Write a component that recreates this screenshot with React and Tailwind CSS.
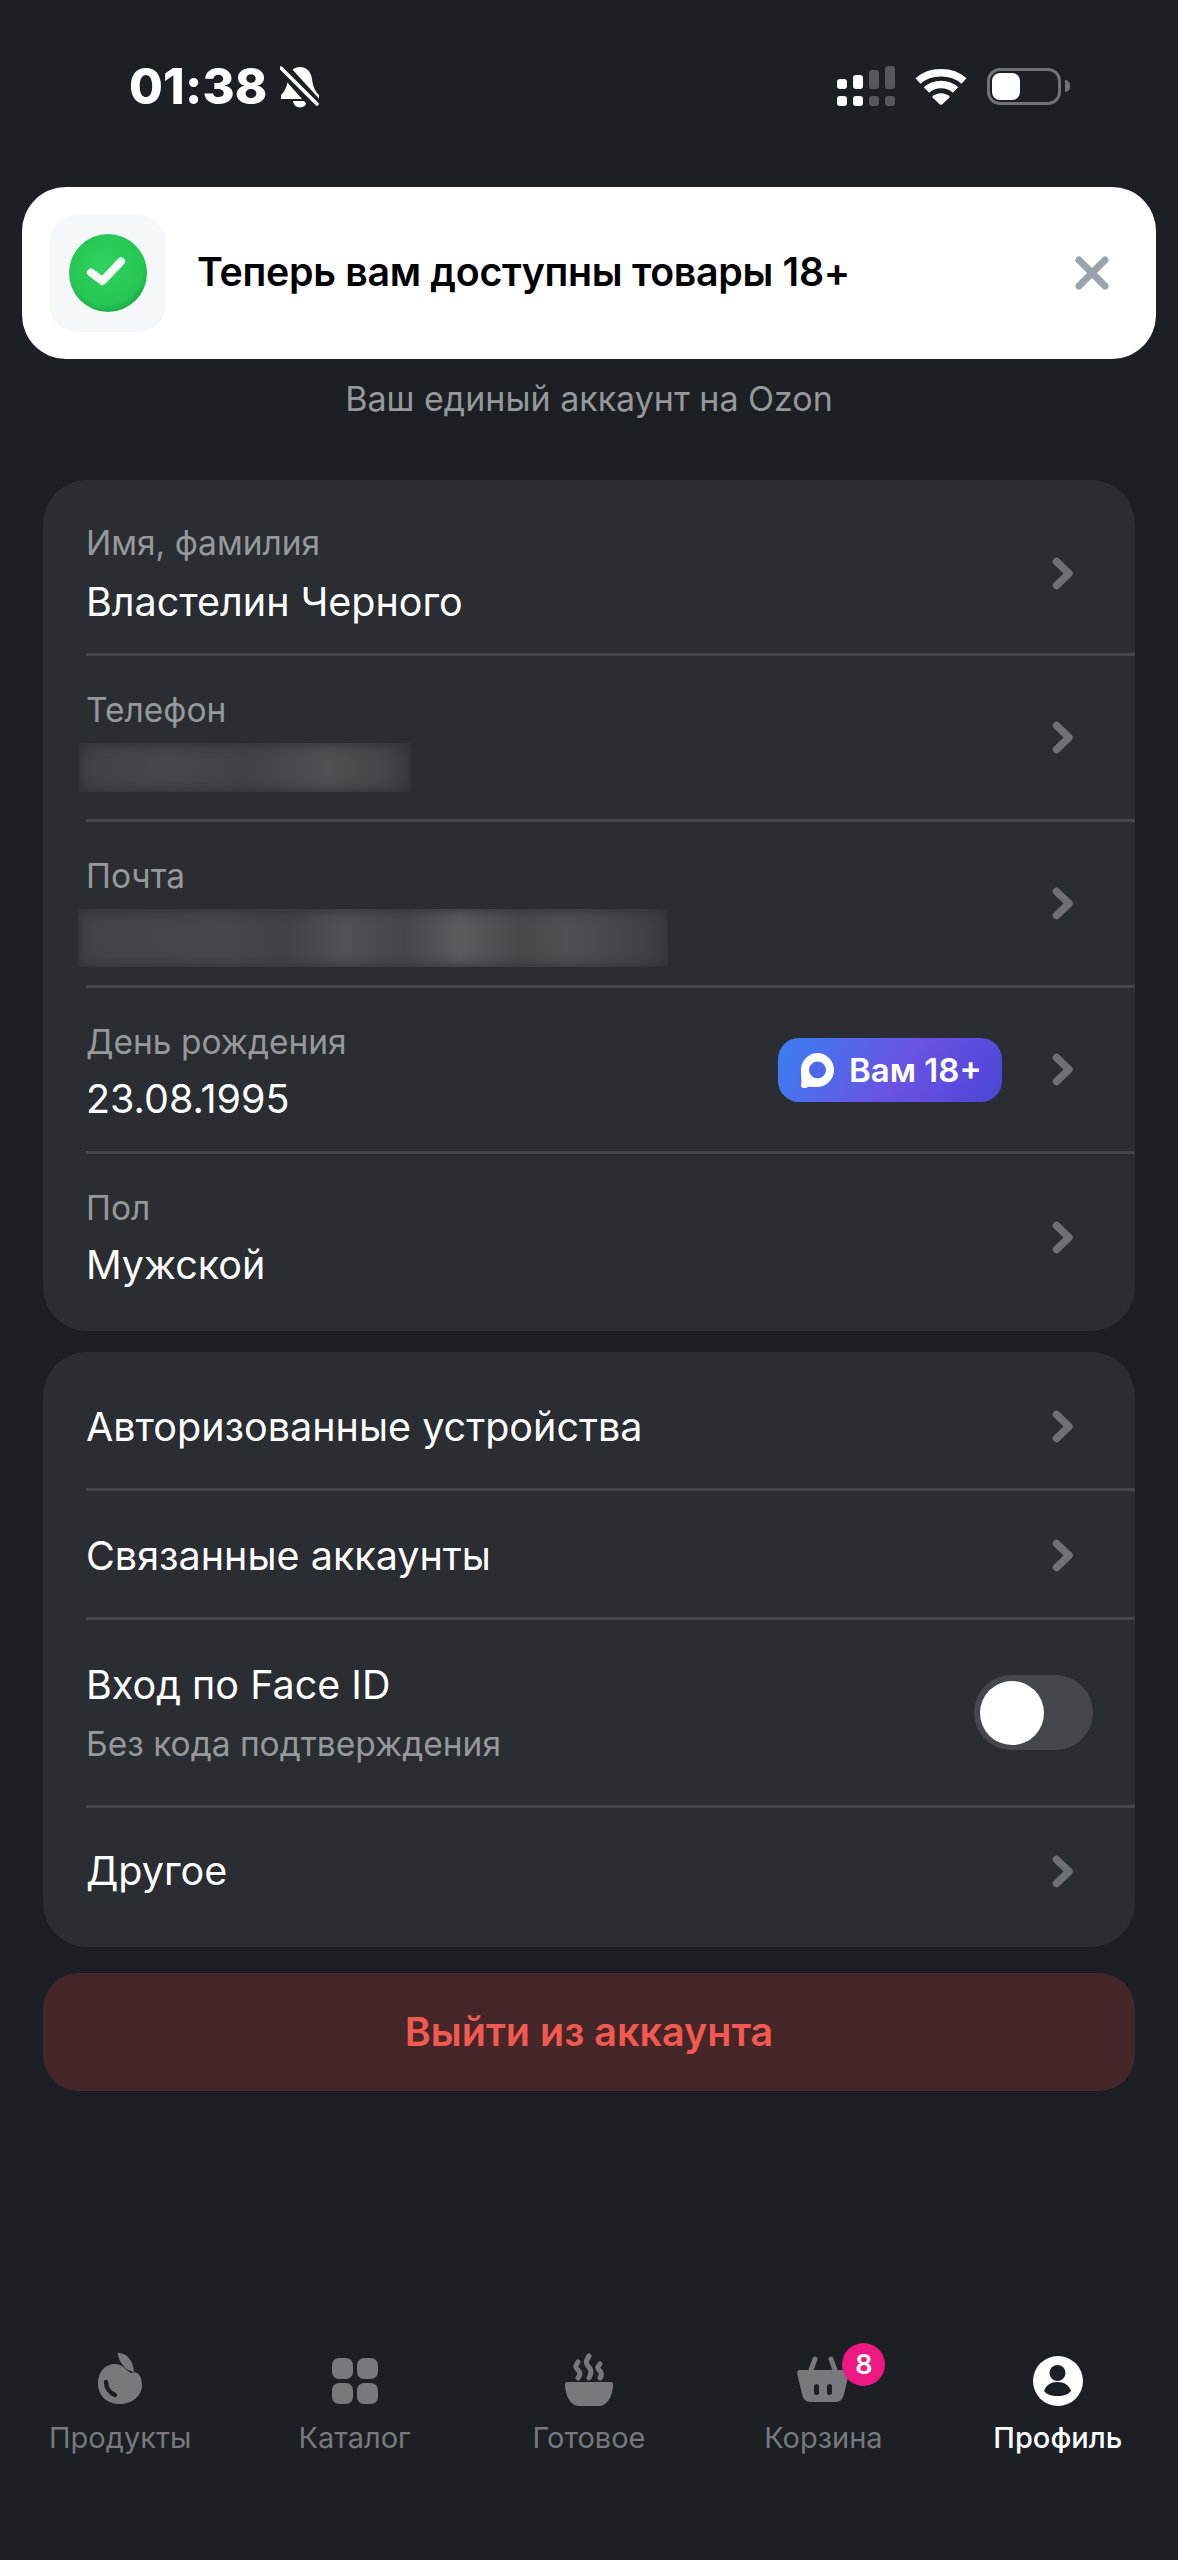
const Chevron = () => (
  <svg width="22" height="33" viewBox="0 0 22 33" className="shrink-0">
    <path d="M4.5 4.5 L17 16.5 L4.5 28.5" fill="none" stroke="#6f7175" strokeWidth="7.5" strokeLinecap="round" strokeLinejoin="round" />
  </svg>
);

const Divider = () => <div className="ml-[43px] h-[3px] bg-[#43464a] shrink-0" />;

const InfoRow = ({ h, pt, label, children, extra, chev = "" }) => (
  <div className={`flex items-center pl-[43px] pr-[61px] shrink-0 ${h}`}>
    <div className={`flex-1 min-w-0 self-start ${pt}`}>
      <div className="text-[33.5px] leading-[40px] text-[#96989b]">{label}</div>
      {children}
    </div>
    {extra}
    <div className={chev}>
      <Chevron />
    </div>
  </div>
);

const Value = ({ children, mt = "mt-[13px]" }) => <div className={`${mt} text-[39.5px] leading-[48px] text-white`}>{children}</div>;

const Blur = ({ w, ml, gradient }) => (
  <div className={`mt-[13px] ${w} ${ml} ${gradient} shadow-[inset_0_0_14px_#2a2d32]`} />
);

const NavRow = ({ h, pad = "", children }) => (
  <div className={`flex items-center justify-between pl-[43px] pr-[61px] shrink-0 ${h} ${pad}`}>
    <div className="text-[39.5px] leading-[48px] text-white">{children}</div>
    <Chevron />
  </div>
);

const Tab = ({ label, active, children }) => (
  <div className="flex flex-col items-center">
    <div className="h-[62px] flex items-end justify-center relative">{children}</div>
    <div className={`mt-[13px] text-[29px] leading-[36px] ${active ? "text-white font-medium" : "text-[#77797c]"}`}>{label}</div>
  </div>
);

export default function App() {
  return (
    <div className="w-[1178px] h-[2560px] bg-[#1c1f24] flex flex-col overflow-hidden font-['Inter','Noto_Sans',sans-serif]">
      {/* status bar */}
      <div className="h-[187px] shrink-0 flex items-start pt-[63px] pl-[129px] pr-[108px] justify-between">
        <div className="flex items-center">
          <span className="text-[49px] leading-[48px] font-extrabold text-white tracking-[0.2px]">01:38</span>
          <svg width="40" height="42" viewBox="0 0 40 42" className="ml-[12px]">
            <path d="M20 1c-7 0-11 5-12 12-1 8-3 12-7 16v4h38v-4c-4-4-6-8-7-16-1-7-5-12-12-12z" fill="#fff" />
            <path d="M13 35a7 6.5 0 0 0 14 0z" fill="#fff" />
            <path d="M-3 1 L37 46" stroke="#1c1f24" strokeWidth="5" />
            <path d="M2 -2 L42 42" stroke="#1c1f24" strokeWidth="8" />
            <path d="M1 2 L37 38" stroke="#fff" strokeWidth="3.5" strokeLinecap="round" />
          </svg>
        </div>
        <div className="flex items-center gap-[20px] h-[46px]">
          <svg width="58" height="40" viewBox="0 0 58 40">
            <g fill="#fff">
              <rect x="0" y="13" width="10" height="10" rx="3" />
              <rect x="16" y="9" width="10" height="14" rx="3" />
              <rect x="0" y="30" width="10" height="10" rx="3" />
              <rect x="16" y="30" width="10" height="10" rx="3" />
            </g>
            <g fill="#56585b">
              <rect x="32" y="4" width="10" height="19" rx="3" />
              <rect x="48" y="0" width="10" height="23" rx="3" />
              <rect x="32" y="30" width="10" height="10" rx="3" />
              <rect x="48" y="30" width="10" height="10" rx="3" />
            </g>
          </svg>
          <svg width="52" height="37" viewBox="0 0 52 37">
            <path d="M3 13 C15 2 37 2 49 13" fill="none" stroke="#fff" strokeWidth="7.5" />
            <path d="M11.5 22 C19 14.5 33 14.5 40.5 22" fill="none" stroke="#fff" strokeWidth="7.5" />
            <path d="M17 29 C22 24 30 24 35 29 L27 36.5 Q26 37 25 36.5z" fill="#fff" />
          </svg>
          <div className="flex items-center">
            <div className="w-[74px] h-[37px] rounded-[13px] border-[3px] border-[#707274] p-[2px]">
              <div className="w-[28px] h-full rounded-[8px] bg-white" />
            </div>
            <div className="w-[5px] h-[12px] ml-[4px] rounded-r-full bg-[#707274]" />
          </div>
        </div>
      </div>

      {/* toast */}
      <div className="mx-[22px] h-[172px] shrink-0 bg-white rounded-[44px] flex items-center pl-[27px] pr-[46px]">
        <div className="w-[117px] h-[117px] rounded-[28px] bg-[#f5f7fa] flex items-center justify-center shrink-0">
          <svg width="78" height="78" viewBox="0 0 78 78">
            <defs>
              <radialGradient id="g" cx="47%" cy="42%" r="60%">
                <stop offset="0%" stopColor="#2fd35f" />
                <stop offset="80%" stopColor="#26c653" />
                <stop offset="100%" stopColor="#1aa843" />
              </radialGradient>
            </defs>
            <circle cx="39" cy="39" r="39" fill="url(#g)" />
            <path d="M22 38.5 L33.5 47 L52 27.5" fill="none" stroke="#f4fbf5" strokeWidth="8" strokeLinecap="round" strokeLinejoin="round" />
          </svg>
        </div>
        <div className="ml-[31px] mb-[2px] flex-1 text-[39.3px] leading-[46px] font-semibold text-black tracking-[-0.3px]">Теперь вам доступны товары 18+</div>
        <svg width="36" height="36" viewBox="0 0 36 36" className="shrink-0">
          <path d="M5 5 L31 31 M31 5 L5 31" stroke="#9aa3ab" strokeWidth="7" strokeLinecap="round" />
        </svg>
      </div>

      <div className="mt-[20px] text-center text-[34px] leading-[40px] text-[#96989b]">Ваш единый аккаунт на Ozon</div>

      {/* card 1 */}
      <div className="mt-[61px] mx-[43px] bg-[#2a2d32] rounded-[44px] flex flex-col shrink-0">
        <InfoRow h="h-[173px]" pt="pt-[43px]" label="Имя, фамилия" chev="pt-[13px]">
          <Value mt="mt-[15px]">Властелин Черного</Value>
        </InfoRow>
        <Divider />
        <InfoRow h="h-[163px]" pt="pt-[34px]" label="Телефон">
          <Blur w="w-[332px] h-[49px]" ml="ml-[-7px]" gradient="bg-[linear-gradient(90deg,#3e4145,#45484c_25%,#3f4246_50%,#4f5255_75%,#45484b_90%,#3a3d41)]" />
        </InfoRow>
        <Divider />
        <InfoRow h="h-[163px]" pt="pt-[34px]" label="Почта">
          <Blur w="w-[590px] h-[58px]" ml="ml-[-8px]" gradient="bg-[linear-gradient(90deg,#404347,#45484c_25%,#3f4246_35%,#505356_45%,#44474b_55%,#5a5c60_65%,#47494d_75%,#4f5255_83%,#3a3d41)]" />
        </InfoRow>
        <Divider />
        <InfoRow
          h="h-[163px]"
          pt="pt-[34px]"
          label="День рождения"
          extra={
            <div className="mr-[50px] w-[224px] h-[64px] rounded-[21px] bg-[linear-gradient(120deg,#3a7ff2,#6a52e4_55%,#4c46d6)] flex items-center pl-[21px] shrink-0">
              <svg width="36" height="36" viewBox="0 0 36 36">
                <path d="M18 1a17 17 0 0 1 0 34c-5 0-9-1-11 1-2 1-5 0-5-3 1-3 0-6 0-15A17 17 0 0 1 18 1z" fill="#fff" />
                <circle cx="18.5" cy="18" r="8.5" fill="#4f6ae8" />
              </svg>
              <span className="ml-[14px] text-[33px] leading-[40px] font-semibold text-white">Вам 18+</span>
            </div>
          }
        >
          <Value>23.08.1995</Value>
        </InfoRow>
        <Divider />
        <InfoRow h="h-[177px]" pt="pt-[34px]" label="Пол" chev="pb-[10px]">
          <Value>Мужской</Value>
        </InfoRow>
      </div>

      {/* card 2 */}
      <div className="mt-[21px] mx-[43px] bg-[#2a2d32] rounded-[44px] flex flex-col shrink-0">
        <NavRow h="h-[136px]" pad="pt-[13px]">Авторизованные устройства</NavRow>
        <Divider />
        <NavRow h="h-[126px]" pad="pt-[3px]">Связанные аккаунты</NavRow>
        <Divider />
        <div className="h-[185px] flex items-center justify-between pl-[43px] pr-[42px] shrink-0">
          <div>
            <div className="text-[39.5px] leading-[48px] text-white">Вход по Face ID</div>
            <div className="mt-[15px] text-[33.5px] leading-[40px] text-[#96989b]">Без кода подтверждения</div>
          </div>
          <div className="w-[119px] h-[75px] rounded-full bg-[#46474c] p-[5.5px]">
            <div className="w-[64px] h-[64px] rounded-full bg-white" />
          </div>
        </div>
        <Divider />
        <NavRow h="h-[139px]" pad="pb-[13px]">Другое</NavRow>
      </div>

      {/* logout */}
      <div className="mt-[26px] mx-[43px] h-[118px] shrink-0 rounded-[36px] bg-[#452629] flex items-center justify-center text-[39.5px] leading-[46px] font-semibold text-[#f2594f]">
        Выйти из аккаунта
      </div>

      {/* tabs */}
      <div className="mt-[254px] px-[3px] grid grid-cols-5 shrink-0">
        <Tab label="Продукты">
          <svg width="45" height="52" viewBox="0 0 45 52" className="mb-[3px]">
            <path d="M19.5 0.7 C28 1 35 7 36 20 C28 19 21 11 19.5 0.7z" fill="#77797c" />
            <path d="M17 12 C24 12 27 17 33 21 C40 18 44 25 44 33 C44 44 34 52 22 52 C9 52 0 44 0 31 C0 20 7 12 17 12z" fill="#77797c" />
            <path d="M8 30 C8 36 12 41 17 43" fill="none" stroke="#1c1f24" strokeWidth="4.5" strokeLinecap="round" />
          </svg>
        </Tab>
        <Tab label="Каталог">
          <svg width="46" height="46" viewBox="0 0 46 46" className="mb-[3px]">
            <g fill="#77797c">
              <rect x="0" y="0" width="21" height="21" rx="7" />
              <rect x="25" y="0" width="21" height="21" rx="7" />
              <rect x="0" y="25" width="21" height="21" rx="7" />
              <rect x="25" y="25" width="21" height="21" rx="7" />
            </g>
          </svg>
        </Tab>
        <Tab label="Готовое">
          <svg width="48" height="53" viewBox="0 0 48 53" className="mb-[1px]">
            <g fill="none" stroke="#77797c" strokeWidth="5" strokeLinecap="round">
              <path d="M13 9 C10 13 10 14 13 17 C16 20 15 22 13 25" />
              <path d="M24 3 C20 9 21 11 24 14 C27 18 26 21 24 25" />
              <path d="M35 11 C32 14 32 15 35 18 C37 20 37 22 35 25" />
            </g>
            <path d="M2 29 H46 Q48 29 48 31 C48 43 42 53 34 53 H14 C6 53 0 43 0 31 Q0 29 2 29z" fill="#77797c" />
          </svg>
        </Tab>
        <Tab label="Корзина">
          <svg width="52" height="47" viewBox="0 0 52 47" className="mb-[4px]">
            <path d="M14 14 L18 3 M38 14 L34 3" stroke="#77797c" strokeWidth="5" strokeLinecap="round" />
            <path d="M3 14 H49 C51 14 52 15 52 17 L47 38 C46 43 43 46 39 46 H13 C9 46 6 43 5 38 L0 17 C0 15 1 14 3 14z" fill="#77797c" />
            <rect x="17" y="28" width="5" height="11" rx="2.5" fill="#1c1f24" />
            <rect x="30" y="28" width="5" height="11" rx="2.5" fill="#1c1f24" />
          </svg>
          <div className="absolute left-[45px] top-[-2px] w-[43px] h-[43px] rounded-full bg-[#ed1882] flex items-center justify-center text-[27px] leading-none font-semibold text-white">8</div>
        </Tab>
        <Tab label="Профиль" active>
          <svg width="50" height="50" viewBox="0 0 50 50" className="mb-[1px]">
            <circle cx="25" cy="25" r="25" fill="#fff" />
            <circle cx="24.5" cy="17" r="8" fill="#1c1f24" />
            <path d="M11 35 C13 29 18 26 24.5 26 C31 26 36 29 38 35 C36 38 31 40 24.5 40 C18 40 13 38 11 35z" fill="#1c1f24" />
          </svg>
        </Tab>
      </div>
    </div>
  );
}
